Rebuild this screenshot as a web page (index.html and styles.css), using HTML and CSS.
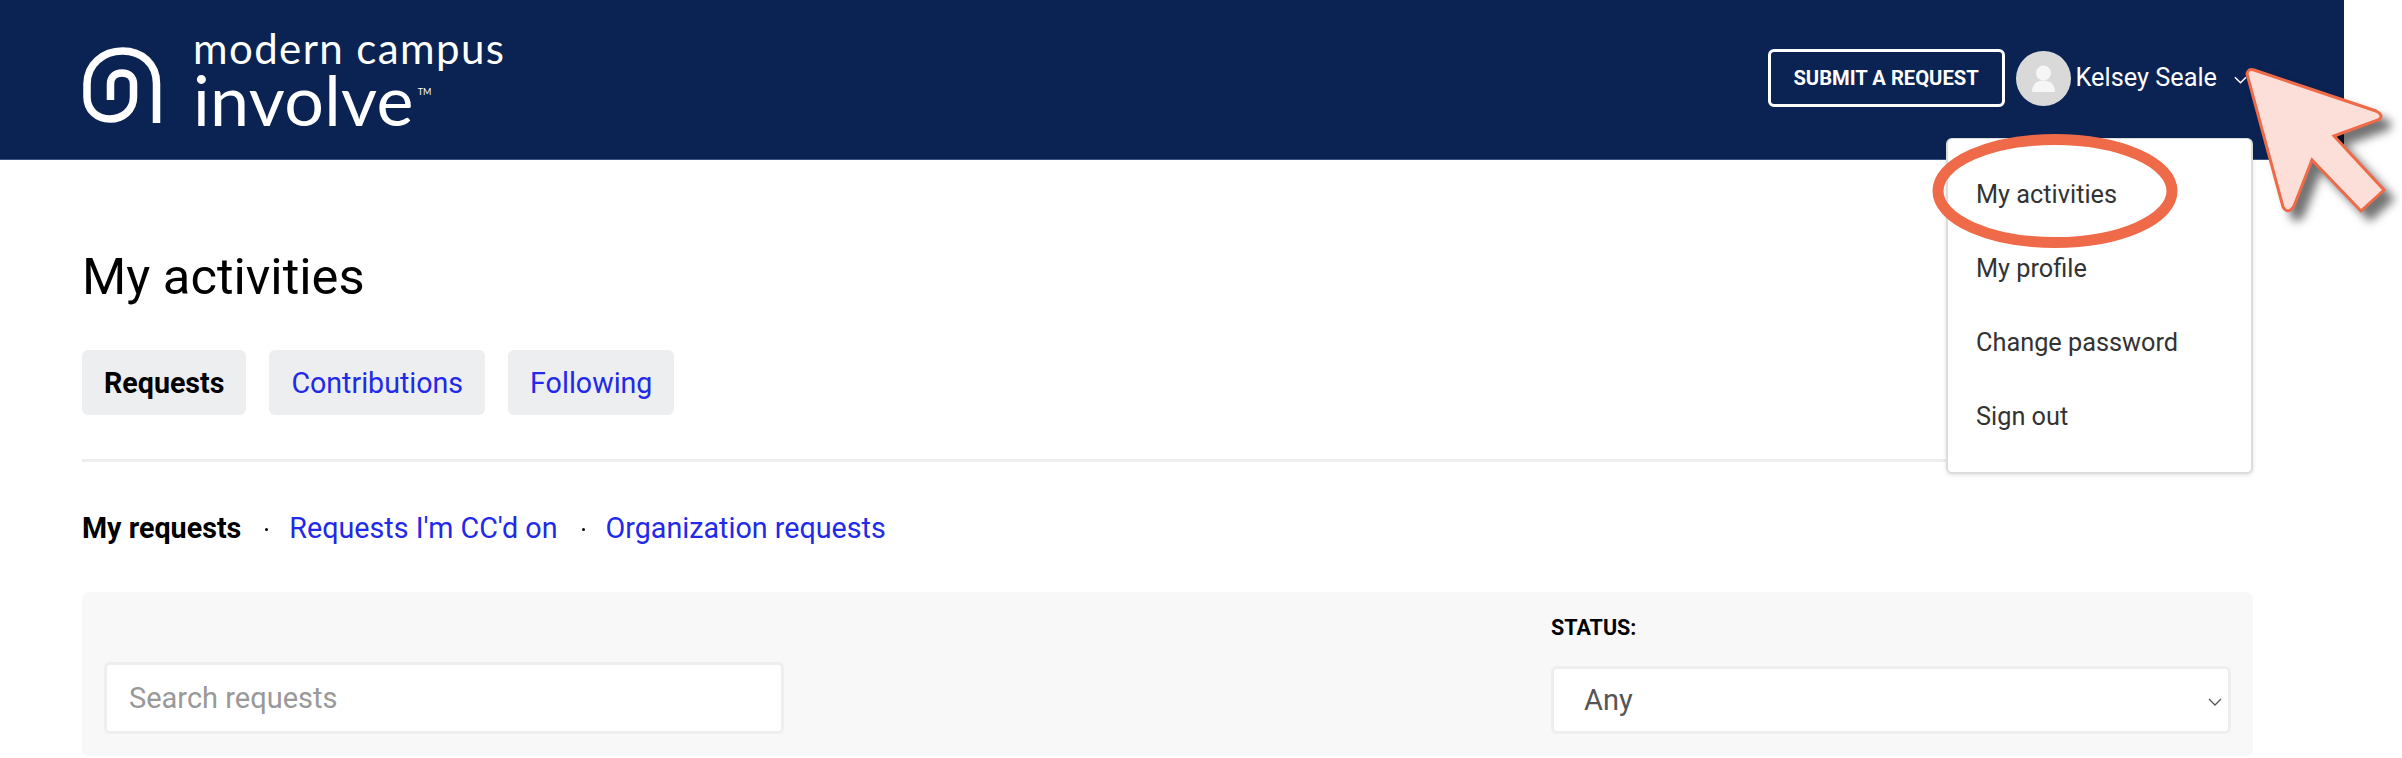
FILE: index.html
```html
<!DOCTYPE html>
<html lang="en">
<head>
<meta charset="utf-8">
<title>My activities</title>
<link rel="stylesheet" href="styles.css">
</head>
<body>
<div class="page">
  <header class="topbar">
    <a class="brand" href="#">
      <svg class="brand-mark" viewBox="0 0 78 76" aria-hidden="true">
        <path d="M73.500 76V36.500C73.500 16.500 58.500 4 39.500 4C20 4 4 17.500 4 37V50C4 63 14 72 27 72C40 72 50.500 63 50.500 50V37C50.500 30 46 26 39 26C32 26 27.500 30 27.500 37V53" />
      </svg>
      <span class="brand-text">
        <span class="brand-top">modern campus</span>
        <span class="brand-bottom">involve<sup class="brand-tm">TM</sup></span>
      </span>
    </a>
    <div class="top-actions">
      <a class="submit-btn" href="#">SUBMIT A REQUEST</a>
      <span class="avatar">
        <svg viewBox="0 0 55 55" aria-hidden="true">
          <circle cx="27.500" cy="22" r="7.500"/>
          <path d="M16 41c0-8 5-11.500 11.500-11.500S39 33 39 41z"/>
        </svg>
      </span>
      <span class="user-name">Kelsey Seale</span>
      <svg class="user-chevron" viewBox="0 0 14 8" aria-hidden="true"><path d="M1 1l6 6 6-6"/></svg>
    </div>
  </header>

  <main class="content">
    <h1 class="title">My activities</h1>
    <nav class="tabs">
      <a class="tab tab-active" href="#">Requests</a>
      <a class="tab" href="#">Contributions</a>
      <a class="tab" href="#">Following</a>
    </nav>
    <hr class="divider">
    <nav class="subnav">
      <strong class="sub-current">My requests</strong>
      <span class="sub-dot"></span>
      <a href="#">Requests I'm CC'd on</a>
      <span class="sub-dot"></span>
      <a href="#">Organization requests</a>
    </nav>
    <section class="filters">
      <input class="search" type="text" placeholder="Search requests">
      <div class="status-field">
        <label class="status-label" for="status">STATUS:</label>
        <div class="select-wrap">
          <select class="status-select" id="status"><option>Any</option></select>
          <svg class="select-chevron" viewBox="0 0 14 8" aria-hidden="true"><path d="M1 1l6 6 6-6"/></svg>
        </div>
      </div>
    </section>
  </main>

  <ul class="menu">
    <li><a href="#">My activities</a></li>
    <li><a href="#">My profile</a></li>
    <li><a href="#">Change password</a></li>
    <li><a href="#">Sign out</a></li>
  </ul>

  <svg class="callout-ring" viewBox="0 0 246 114" aria-hidden="true">
    <ellipse cx="123" cy="57" rx="117" ry="51.500"/>
  </svg>
  <svg class="callout-arrow" viewBox="0 0 162 162" aria-hidden="true">
    <path d="M5 9Q6 3 12 5L134 46Q143 51 136 55L92 71L142 125L119 146L70 95L52 141Q46 150 41 142Z"/>
  </svg>
</div>
</body>
</html>
```
FILE: styles.css
```css
* { box-sizing: border-box; }
html, body { margin: 0; padding: 0; background: #fff; }
body { font-family: Roboto, "Liberation Sans", sans-serif; color: #000; overflow: hidden; }
a { text-decoration: none; color: #2229e8; }

.page { position: relative; width: 2402px; height: 758px; overflow: hidden; }

.topbar {
  width: 2344px; height: 160px; background: #0b2353;
  border-bottom: 1px solid #3d5480;
  display: flex; align-items: center; justify-content: space-between;
  padding: 0 97px 0 83px;
}
.brand { display: flex; align-items: center; gap: 32px; height: 100%; }
.brand-mark { width: 78px; height: 76px; fill: none; stroke: #fff; stroke-width: 7.500px; margin-top: 11px; }
.brand-text { display: flex; flex-direction: column; color: #fff; font-family: Lato, sans-serif; font-weight: 400; margin-top: -8px; }
.brand-top { font-size: 42px; line-height: 46px; letter-spacing: 1.4px; white-space: nowrap; }
.brand-bottom { font-size: 70px; line-height: 56px; letter-spacing: .3px; position: relative; white-space: nowrap; }
.brand-tm { font-size: 9px; line-height: 0; letter-spacing: 0; vertical-align: baseline; position: relative; top: -31px; left: 4px; font-weight: 400; }

.top-actions { display: flex; align-items: center; margin-top: -3px; }
.submit-btn {
  width: 237px; height: 58px; display: flex; align-items: center; justify-content: center;
  border: 3.500px solid #fff; border-radius: 6px; color: #fff;
  font-size: 20.200px; font-weight: 700; margin-right: 11px;
}
.avatar { width: 55px; height: 55px; border-radius: 50%; background: #d9d9d9; margin-right: 5px; display: block; }
.avatar svg { display: block; width: 55px; height: 55px; fill: #f6f6f6; }
.user-name { color: #fff; font-size: 25.300px; line-height: 30px; white-space: nowrap; }
.user-chevron { width: 13px; height: 8px; margin-left: 17px; fill: none; stroke: #fff; stroke-width: 1.600px; margin-top: 3px; }

.content { width: 2344px; padding: 87px 91px 0 82px; }
.title { margin: 0; font-size: 50.700px; line-height: 60px; font-weight: 400; color: #000; }
.tabs { display: flex; gap: 23px; margin-top: 43px; }
.tab {
  height: 65px; padding: 0 22px; display: flex; align-items: center;
  background: #edeef0; border-radius: 6px; font-size: 28.600px;
}
.tab-active { color: #000; font-weight: 700; }
.divider { height: 3px; border: 0; margin: 44px 0 0; background: #eceef0; }
.subnav { display: flex; align-items: center; margin-top: 48px; height: 36px; font-size: 28.700px; white-space: nowrap; }
.sub-current { font-weight: 700; color: #000; }
.sub-dot { width: 3px; height: 3px; border-radius: 50%; background: #000; margin: 2px 21px 0 24px; }

.filters {
  margin-top: 46px; height: 164px; background: #f8f8f8; border-radius: 7px;
  display: grid; grid-template-columns: 680px 680px; justify-content: space-between; align-items: end;
  padding: 24px 22px 22px 22px;
}
.search {
  width: 100%; height: 72px; padding: 0 22px; border: 3px solid #edeef0; border-radius: 6px;
  background: #fff; font: 400 29px Roboto, sans-serif; color: #333; outline: 0;
}
.search::placeholder { color: #999; opacity: 1; }
.status-field { display: flex; flex-direction: column; gap: 26px; }
.status-label { font-size: 21.500px; line-height: 24px; font-weight: 700; color: #000; }
.select-wrap { position: relative; height: 68px; }
.status-select {
  appearance: none; -webkit-appearance: none; width: 100%; height: 100%;
  padding: 0 30px; border: 3px solid #edeef0; border-radius: 6px; background: #fff;
  font: 400 29px Roboto, sans-serif; color: #555; outline: 0;
}
.select-chevron { position: absolute; right: 9px; top: 32px; width: 14px; height: 8px; fill: none; stroke: #555; stroke-width: 1.300px; }

.menu {
  position: absolute; left: 1946px; top: 138px; width: 307px; height: 336px;
  margin: 0; padding: 18px 0 0; list-style: none; background: #fff;
  border: 2px solid #dcdcdc; border-top-width: 1px; border-radius: 6px;
  box-shadow: 0 1px 4px rgba(0,0,0,.12);
}
.menu li { height: 74px; display: flex; align-items: center; padding-left: 28px; }
.menu a { color: #333; font-size: 25.300px; }

.callout-ring { position: absolute; left: 1932px; top: 134px; width: 246px; height: 114px; fill: none; stroke: #ee6a48; stroke-width: 11px; }
.callout-arrow {
  position: absolute; left: 2242px; top: 65px; width: 162px; height: 162px;
  fill: #fbdfd8; stroke: #ee6a48; stroke-width: 3px; stroke-linejoin: miter;
  filter: drop-shadow(9px 9px 5px rgba(0,0,0,.55));
  overflow: visible;
}
```
